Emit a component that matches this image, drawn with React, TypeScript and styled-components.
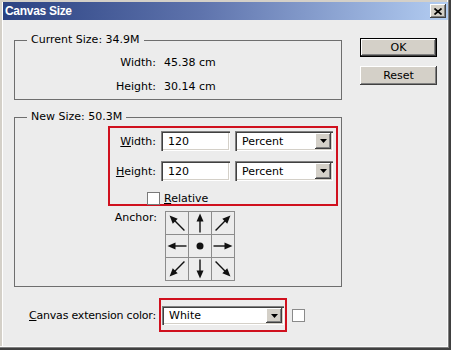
import React from 'react';
import styled, { createGlobalStyle } from 'styled-components';

const GlobalStyle = createGlobalStyle`
  html, body {
    margin: 0;
    padding: 0;
    background: #ececec;
  }
  body {
    font-family: "DejaVu Sans", Verdana, sans-serif;
    font-size: 11px;
    color: #000;
  }
  * {
    box-sizing: border-box;
  }
`;

const Window = styled.div`
  width: 451px;
  height: 350px;
  padding: 2px 3px 4px 3px;
  background: #ececec;
  display: flex;
  flex-direction: column;
  box-shadow:
    inset -2px -2px 0 #404040,
    inset -3px -3px 0 #808080,
    inset -4px -4px 0 #fafafa,
    inset 2px 2px 0 #d4d0c8,
    inset 3px 3px 0 #ffffff;
`;

const TitleBar = styled.div`
  height: 18px;
  flex: none;
  display: flex;
  align-items: center;
  justify-content: space-between;
  padding: 0 2px 0 2px;
  background: linear-gradient(90deg, #2b4282 0%, #5f74ad 45%, #b3cdf2 100%);
`;

const Title = styled.span`
  font-family: "Liberation Sans", Arial, sans-serif;
  font-weight: bold;
  font-size: 12px;
  letter-spacing: -0.3px;
  color: #fff;
`;

const CloseButton = styled.div`
  width: 16px;
  height: 14px;
  display: flex;
  align-items: center;
  justify-content: center;
  background: #d4d0c8;
  box-shadow:
    inset -1px -1px 0 #404040,
    inset 1px 1px 0 #ffffff,
    inset -2px -2px 0 #808080;
`;

const Body = styled.div`
  flex: 1;
  display: flex;
  padding-left: 11px;
`;

const LeftColumn = styled.div`
  width: 328px;
  display: flex;
  flex-direction: column;
`;

const RightColumn = styled.div`
  width: 77px;
  margin-left: 18px;
  padding-top: 18px;
  display: flex;
  flex-direction: column;
  gap: 9px;
`;

const Group = styled.fieldset<{ $top: number; $pad: string }>`
  margin: ${p => p.$top}px 0 0 0;
  padding: ${p => p.$pad};
  border: 1px solid #6e6e6e;
  min-width: 0;
`;

const Legend = styled.legend`
  margin-left: 12px;
  padding: 0 4px;
  line-height: 14px;
`;

const InfoRow = styled.div`
  display: grid;
  grid-template-columns: 141px auto;
  column-gap: 8px;
  height: 24px;
  align-items: center;
`;

const InfoLabel = styled.span`
  text-align: right;
`;

const HighlightBox = styled.div<{ $w: number; $h: number }>`
  flex: none;
  width: ${p => p.$w}px;
  height: ${p => p.$h}px;
  border: 2px solid #d0101e;
`;

const SizeBox = styled(HighlightBox)`
  margin-left: 93px;
  padding-top: 3px;
`;

const SizeGrid = styled.div`
  display: grid;
  grid-template-columns: 46px 69px 98px;
  column-gap: 5px;
  row-gap: 10px;
  align-items: center;
`;

const FieldLabel = styled.label`
  text-align: right;
  white-space: nowrap;
`;

const sunken = `
  background: #fff;
  box-shadow:
    inset 1px 1px 0 #808080,
    inset 2px 2px 0 #404040,
    inset -1px -1px 0 #ffffff,
    inset -2px -2px 0 #d4d0c8;
`;

const TextInput = styled.input`
  width: 69px;
  height: 20px;
  border: none;
  outline: none;
  padding: 0 0 0 7px;
  font: inherit;
  color: #000;
  ${sunken}
`;

const Select = styled.div<{ $w: number }>`
  width: ${p => p.$w}px;
  height: ${p => (p.$w > 110 ? 19 : 20)}px;
  display: flex;
  align-items: center;
  justify-content: space-between;
  padding: 2px;
  ${sunken}
`;

const SelectText = styled.span`
  padding-left: 5px;
`;

const DropButton = styled.div`
  width: 16px;
  height: 100%;
  display: flex;
  align-items: center;
  justify-content: center;
  background: #d4d0c8;
  box-shadow:
    inset -1px -1px 0 #404040,
    inset 1px 1px 0 #ffffff,
    inset -2px -2px 0 #808080;
`;

const CheckRow = styled.div`
  display: flex;
  align-items: center;
  gap: 4px;
  margin-top: 11px;
  padding-left: 37px;
`;

const CheckBox = styled.span`
  width: 13px;
  height: 13px;
  background: #fff;
  border: 1px solid #7a7a7a;
`;

const AnchorRow = styled.div`
  display: flex;
  align-items: flex-start;
  gap: 8px;
  margin: 5px 0 0 93px;
`;

const AnchorLabel = styled.span`
  width: 49px;
  text-align: right;
  line-height: 14px;
`;

const AnchorGrid = styled.div`
  display: grid;
  grid-template-columns: repeat(3, 22px);
  grid-auto-rows: 22px;
  gap: 1px;
  padding: 1px;
  background: #8c8c8c;
`;

const AnchorCell = styled.div`
  background: #ececec;
  display: flex;
  align-items: center;
  justify-content: center;
`;

const ColorRow = styled.div`
  display: flex;
  align-items: center;
  margin-top: 11px;
  padding-left: 15px;
`;

const ColorLabel = styled.span`
  flex: none;
  width: 130px;
  white-space: nowrap;
  letter-spacing: -0.2px;
`;

const ColorBox = styled(HighlightBox)`
  padding: 6px 1px 0 1px;
`;

const Swatch = styled.span`
  flex: none;
  width: 13px;
  height: 13px;
  margin-left: 5px;
  background: #fff;
  border: 1px solid #8a8a8a;
`;

const DialogButton = styled.div<{ $default?: boolean }>`
  height: 19px;
  display: flex;
  align-items: center;
  justify-content: center;
  background: #d4d0c8;
  border: ${p => (p.$default ? '1px solid #000' : 'none')};
  box-shadow:
    inset -1px -1px 0 #404040,
    inset 1px 1px 0 #ffffff,
    inset -2px -2px 0 #808080;
`;

const DownTriangle = () => (
  <svg width="7" height="4" viewBox="0 0 7 4">
    <polygon points="0,0 7,0 3.5,4" fill="#000" />
  </svg>
);

const CloseGlyph = () => (
  <svg width="8" height="7" viewBox="0 0 8 7">
    <path d="M0.5 0.5 L7.5 6.5 M7.5 0.5 L0.5 6.5" stroke="#000" strokeWidth="1.7" />
  </svg>
);

const Arrow: React.FC<{ angle: number }> = ({ angle }) => {
  const diag = angle % 90 !== 0;
  const len = diag ? 21 : 19;
  const tip = 11 - len / 2;
  const tail = 11 + len / 2;
  return (
    <svg width="22" height="22" viewBox="0 0 22 22">
      <g transform={`rotate(${angle} 11 11)`}>
        <line x1="11" y1={tip + 6} x2="11" y2={tail} stroke="#111" strokeWidth="1.4" />
        <polygon points={`11,${tip} 7.5,${tip + 8} 14.5,${tip + 8}`} fill="#111" />
      </g>
    </svg>
  );
};

const anchors: (number | null)[] = [-45, 0, 45, -90, null, 90, -135, 180, 135];

const App: React.FC = () => {
  return (
    <>
      <GlobalStyle />
      <Window>
        <TitleBar>
          <Title>Canvas Size</Title>
          <CloseButton>
            <CloseGlyph />
          </CloseButton>
        </TitleBar>
        <Body>
          <LeftColumn>
            <Group $top={13} $pad="3px 0 1px 0">
              <Legend>Current Size: 34.9M</Legend>
              <InfoRow>
                <InfoLabel>Width:</InfoLabel>
                <span>45.38 cm</span>
              </InfoRow>
              <InfoRow>
                <InfoLabel>Height:</InfoLabel>
                <span>30.14 cm</span>
              </InfoRow>
            </Group>

            <Group $top={10} $pad="2px 0 5px 0">
              <Legend>New Size: 50.3M</Legend>
              <SizeBox $w={230} $h={80}>
                <SizeGrid>
                  <FieldLabel><u>W</u>idth:</FieldLabel>
                  <TextInput defaultValue="120" />
                  <Select $w={98}>
                    <SelectText>Percent</SelectText>
                    <DropButton><DownTriangle /></DropButton>
                  </Select>
                  <FieldLabel><u>H</u>eight:</FieldLabel>
                  <TextInput defaultValue="120" />
                  <Select $w={98}>
                    <SelectText>Percent</SelectText>
                    <DropButton><DownTriangle /></DropButton>
                  </Select>
                </SizeGrid>
                <CheckRow>
                  <CheckBox />
                  <span><u>R</u>elative</span>
                </CheckRow>
              </SizeBox>
              <AnchorRow>
                <AnchorLabel>Anchor:</AnchorLabel>
                <AnchorGrid>
                  {anchors.map((a, i) => (
                    <AnchorCell key={i}>
                      {a === null ? (
                        <svg width="8" height="8" viewBox="0 0 8 8">
                          <circle cx="4" cy="4" r="3.5" fill="#111" />
                        </svg>
                      ) : (
                        <Arrow angle={a} />
                      )}
                    </AnchorCell>
                  ))}
                </AnchorGrid>
              </AnchorRow>
            </Group>

            <ColorRow>
              <ColorLabel><u>C</u>anvas extension color:</ColorLabel>
              <ColorBox $w={128} $h={34}>
                <Select $w={122}>
                  <SelectText>White</SelectText>
                  <DropButton><DownTriangle /></DropButton>
                </Select>
              </ColorBox>
              <Swatch />
            </ColorRow>
          </LeftColumn>

          <RightColumn>
            <DialogButton $default>OK</DialogButton>
            <DialogButton>Reset</DialogButton>
          </RightColumn>
        </Body>
      </Window>
    </>
  );
};

export default App;
